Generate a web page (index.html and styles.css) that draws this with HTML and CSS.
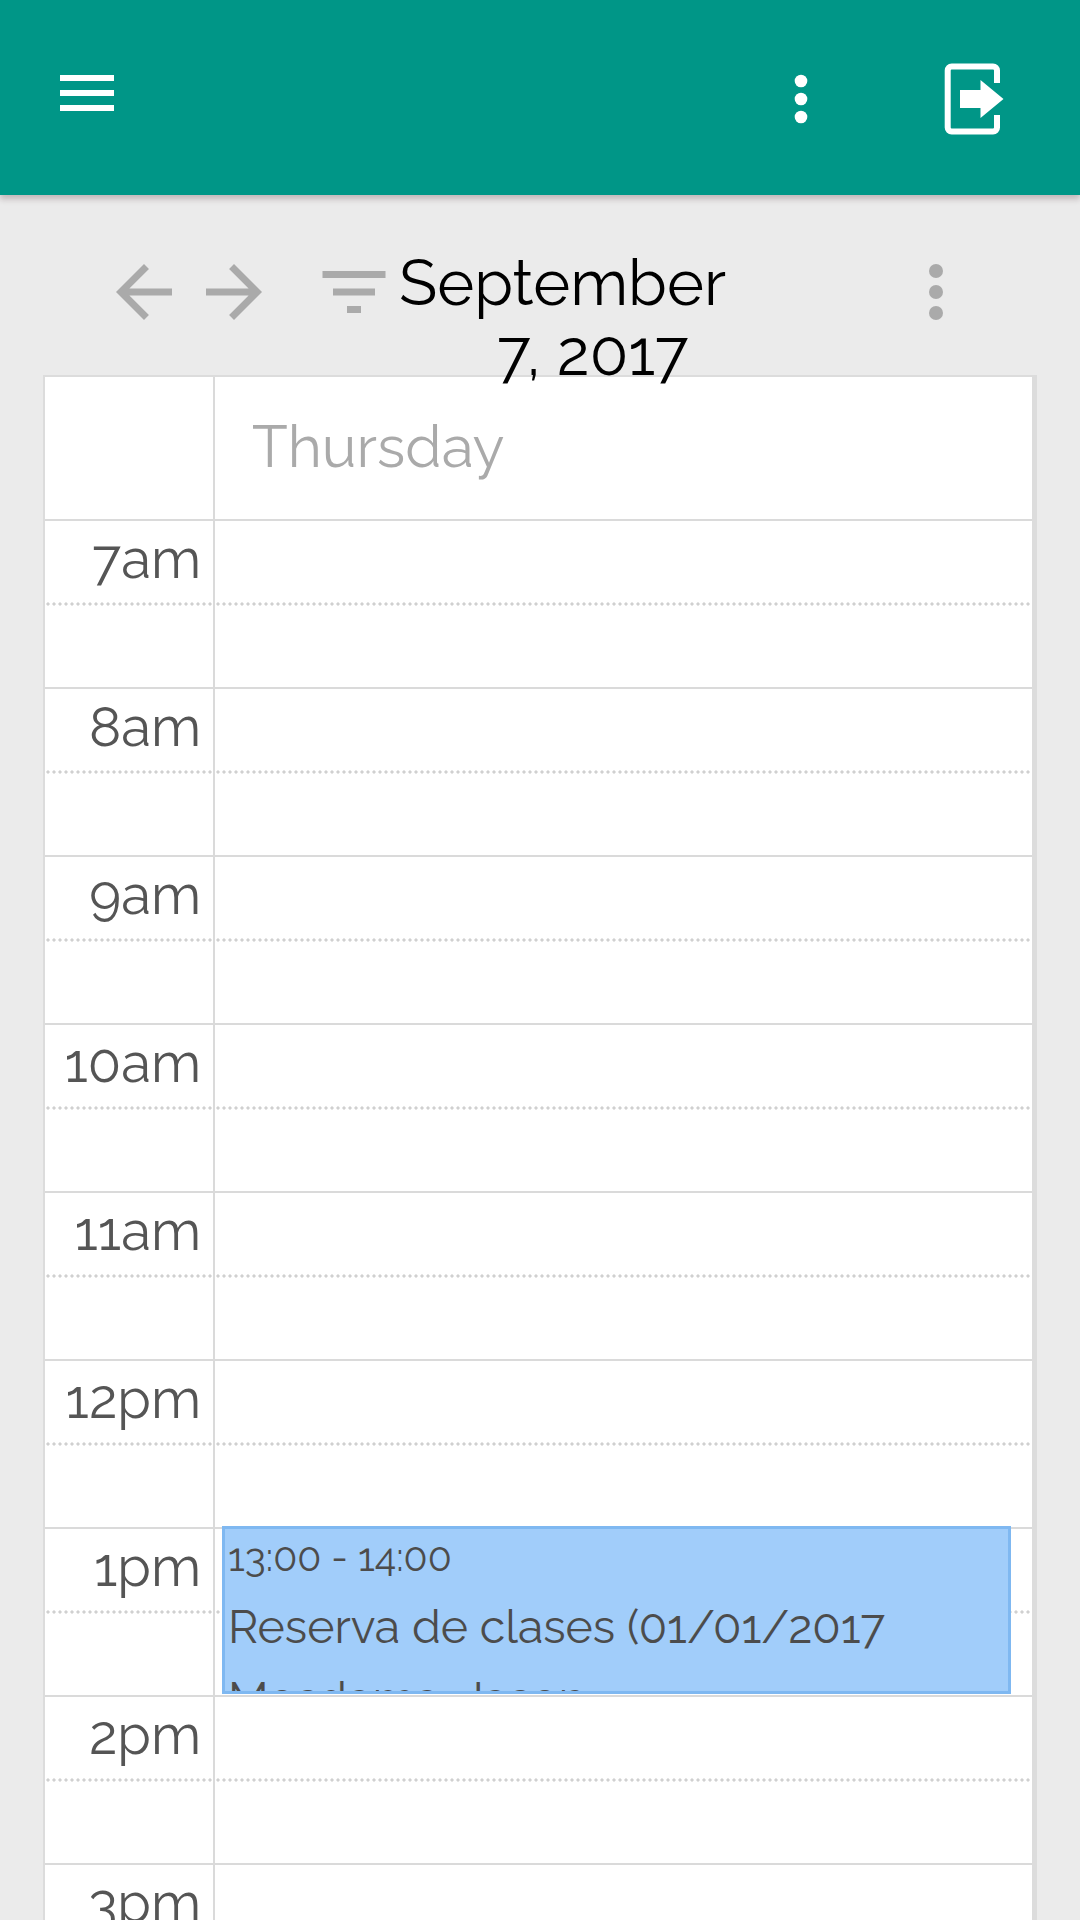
FILE: index.html
```
<!DOCTYPE html>
<html lang="en">
<head>
<meta charset="utf-8">
<title>Calendar</title>
<link rel="stylesheet" href="styles.css">
</head>
<body>
<header class="appbar">
  <svg class="menu" viewBox="0 0 54 36"><path d="M0 0h54v6H0zM0 15h54v6H0zM0 30h54v6H0z"/></svg>
  <svg class="more" viewBox="0 0 14 50"><circle cx="7" cy="7" r="6.3"/><circle cx="7" cy="25" r="6.3"/><circle cx="7" cy="43" r="6.3"/></svg>
  <svg class="logout" viewBox="0 0 60 74"><path class="door" d="M53 21V8.500a4 4 0 0 0-4-4H7.700a4 4 0 0 0-4 4v57a4 4 0 0 0 4 4h41.300a4 4 0 0 0 4-4V53"/><path d="M16 28h20.500V18L59.500 37 36.500 56V46H16z"/></svg>
</header>
<section class="toolbar">
  <div class="nav">
    <svg viewBox="0 0 24 24"><path d="M20 11H7.830l5.590-5.590L12 4l-8 8 8 8 1.410-1.410L7.830 13H20v-2z"/></svg>
    <svg viewBox="0 0 24 24"><path d="M12 4l-1.410 1.410L16.170 11H4v2h12.170l-5.580 5.590L12 20l8-8z"/></svg>
    <svg class="filter" viewBox="0 0 24 24"><path d="M10 18h4v-2h-4v2zM3 6v2h18V6H3zm3 7h12v-2H6v2z"/></svg>
  </div>
  <h1 class="title"><span class="month">September</span><span class="day">7, 2017</span></h1>
  <svg class="options" viewBox="0 0 24 24"><circle cx="12" cy="6" r="2"/><circle cx="12" cy="12" r="2"/><circle cx="12" cy="18" r="2"/></svg>
</section>
<main class="calendar">
  <div class="row head"><div class="time"></div><div class="slot"><span class="weekday">Thursday</span></div></div>
  <div class="row"><div class="time"><span class="hour">7am</span></div><div class="slot"></div></div>
  <div class="row"><div class="time"><span class="hour">8am</span></div><div class="slot"></div></div>
  <div class="row"><div class="time"><span class="hour">9am</span></div><div class="slot"></div></div>
  <div class="row"><div class="time"><span class="hour">10am</span></div><div class="slot"></div></div>
  <div class="row"><div class="time"><span class="hour">11am</span></div><div class="slot"></div></div>
  <div class="row"><div class="time"><span class="hour">12pm</span></div><div class="slot"></div></div>
  <div class="row"><div class="time"><span class="hour">1pm</span></div><div class="slot">
    <article class="event">
      <div class="when">13:00 - 14:00</div>
      <div class="what">Reserva de clases (01/01/2017</div>
      <div class="what">Mosdama, Jason</div>
    </article>
  </div></div>
  <div class="row"><div class="time"><span class="hour">2pm</span></div><div class="slot"></div></div>
  <div class="row"><div class="time"><span class="hour">3pm</span></div><div class="slot"></div></div>
</main>
</body>
</html>
```
FILE: styles.css
```
* { box-sizing: border-box; margin: 0; }
body {
  width: 1080px; height: 1920px; overflow: hidden;
  display: flex; flex-direction: column;
  background: #ebebeb;
  font-family: Raleway, Lato, sans-serif; font-weight: 400;
}
svg { display: block; flex: none; }

.appbar {
  flex: none; height: 195px; display: flex; align-items: flex-start;
  padding: 0 76px 0 60px; background: #009687; fill: #fff;
  box-shadow: 0 4px 6px rgba(60, 20, 30, .24);
}
.menu { width: 54px; height: 36px; margin-top: 75px; }
.more { width: 14px; height: 50px; margin: 74px 0 0 auto; }
.logout { width: 60px; height: 74px; margin: 62px 0 0 136px; }
.door { fill: none; stroke: #fff; stroke-width: 6; }

.toolbar {
  flex: none; height: 180px; display: flex; justify-content: space-between;
  padding: 54.5px 102px 0 102px; fill: #aaa;
}
.toolbar svg { width: 84px; height: 84px; }
.nav { display: flex; width: 294px; flex: none; }
.nav svg + svg { margin-left: 6px; }
.nav .filter { margin-left: 36px; }
.title {
  flex: 1; display: flex; flex-direction: column; align-items: flex-start;
  margin-top: -1.500px; font-size: 63px; font-weight: 400; line-height: 70px;
  color: #000; z-index: 1; white-space: nowrap;
}
.month { margin-left: 3px; }
.day { margin-left: 101px; }

.calendar {
  flex: 1; min-height: 0; overflow: hidden; margin: 0 43px 0 43px;
  border: 2px solid #dcdcdc; border-right-width: 5px; border-bottom: 0; background: #fff;
}
.row { display: flex; height: 168px; border-top: 2px solid #dadada; }
.head { height: 142px; border-top: 0; }
.time {
  width: 170px; flex: none; border-right: 2px solid #dadada;
  padding-right: 12px; text-align: right; color: #555;
}
.slot { flex: 1; min-width: 0; }
.row:not(.head) > div {
  background: radial-gradient(circle, #d0d0d0 1.3px, transparent 1.9px) 0 81px / 6px 4px repeat-x;
}
.weekday {
  display: inline-block; margin: 34px 0 0 37px; font-size: 58.500px; line-height: 72px;
  color: #aaa;
}
.hour {
  display: inline-block; margin-top: 6px; font-size: 54.500px; line-height: 64px;
}
.event {
  width: 789px; height: 168px; margin: -3px 0 0 7px; padding-left: 3px;
  overflow: hidden; background: #a1cdfa; border: 3px solid #7fb8f1; color: #4c4c4c;
}
.event > div { white-space: nowrap; }
.when { font-size: 39.300px; line-height: 56px; margin-bottom: 6px; }
.what { font-size: 46.400px; line-height: 72px; }
```
